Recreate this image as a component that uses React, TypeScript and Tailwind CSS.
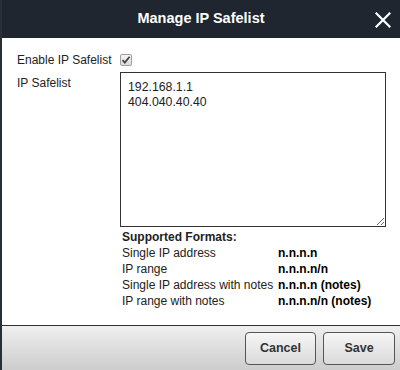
import { useState } from 'react';

const formats = [
  { label: 'Single IP address', value: 'n.n.n.n' },
  { label: 'IP range', value: 'n.n.n.n/n' },
  { label: 'Single IP address with notes', value: 'n.n.n.n (notes)' },
  { label: 'IP range with notes', value: 'n.n.n.n/n (notes)' },
];

function CloseIcon() {
  return (
    <svg width="16" height="16" viewBox="0 0 16 16" className="block">
      <path d="M1.5 1.5 L14.5 14.5 M14.5 1.5 L1.5 14.5" stroke="#fff" strokeWidth="2.2" strokeLinecap="square" />
    </svg>
  );
}

function CheckBox({ checked, onToggle }: { checked: boolean; onToggle: () => void }) {
  return (
    <button
      type="button"
      onClick={onToggle}
      className="flex h-[12px] w-[12px] items-center justify-center rounded-[2px] border border-[#a0a0a0] bg-gradient-to-b from-[#f4f4f4] to-[#dcdcdc]"
    >
      {checked && (
        <svg width="10" height="10" viewBox="0 0 10 10">
          <path d="M1.5 5.2 L3.8 7.6 L8.6 1.8" stroke="#444" strokeWidth="1.8" fill="none" />
        </svg>
      )}
    </button>
  );
}

export default function App() {
  const [enabled, setEnabled] = useState(true);

  return (
    <div className="flex h-[370px] w-[400px] flex-col overflow-hidden border-l-2 border-[#2a2f36] bg-white font-['Liberation_Sans',Arial,sans-serif] text-[12px] text-[#222]">
      {/* Header */}
      <header className="relative flex h-[38px] shrink-0 items-center justify-center bg-[#1f2630]">
        <span className="text-[14.5px] font-bold text-white">Manage IP Safelist</span>
        <button type="button" className="absolute right-[9px] top-[12px]">
          <CloseIcon />
        </button>
      </header>

      {/* Body */}
      <div className="flex-1 pl-[15px] pt-[14px]">
        <div className="grid grid-cols-[103px_1fr] leading-[16px]">
          <div>Enable IP Safelist</div>
          <div className="flex h-[16px] items-center">
            <CheckBox checked={enabled} onToggle={() => setEnabled(!enabled)} />
          </div>

          <div className="mt-[7px]">IP Safelist</div>
          <div className="mt-[4px]">
            <textarea
              defaultValue={'192.168.1.1\n404.040.40.40'}
              className="block h-[155px] w-[266px] border border-[#333] px-[7px] py-[7px] font-['Liberation_Sans',Arial,sans-serif] text-[12.3px] leading-[15px] text-[#222] outline-none"
            />
            <div className="ml-[2px] mt-[2px]">
              <div className="font-bold">Supported Formats:</div>
              {formats.map((f) => (
                <div key={f.label} className="grid grid-cols-[156px_1fr]">
                  <span>{f.label}</span>
                  <span className="font-bold text-black">{f.value}</span>
                </div>
              ))}
            </div>
          </div>
        </div>
      </div>

      {/* Footer */}
      <footer className="flex h-[45px] shrink-0 items-start justify-end gap-[7px] border-t border-[#333] bg-gradient-to-b from-[#efefef] to-[#cdcdcd] pr-[5px] pt-[6px]">
        <button
          type="button"
          className="h-[33px] w-[71px] rounded-[4px] border border-[#555] bg-gradient-to-b from-[#f6f6f6] to-[#dadada] text-[12.5px] font-bold text-[#333]"
        >
          Cancel
        </button>
        <button
          type="button"
          className="h-[33px] w-[72px] rounded-[4px] border border-[#555] bg-gradient-to-b from-[#f6f6f6] to-[#dadada] text-[12.5px] font-bold text-[#333]"
        >
          Save
        </button>
      </footer>
    </div>
  );
}
